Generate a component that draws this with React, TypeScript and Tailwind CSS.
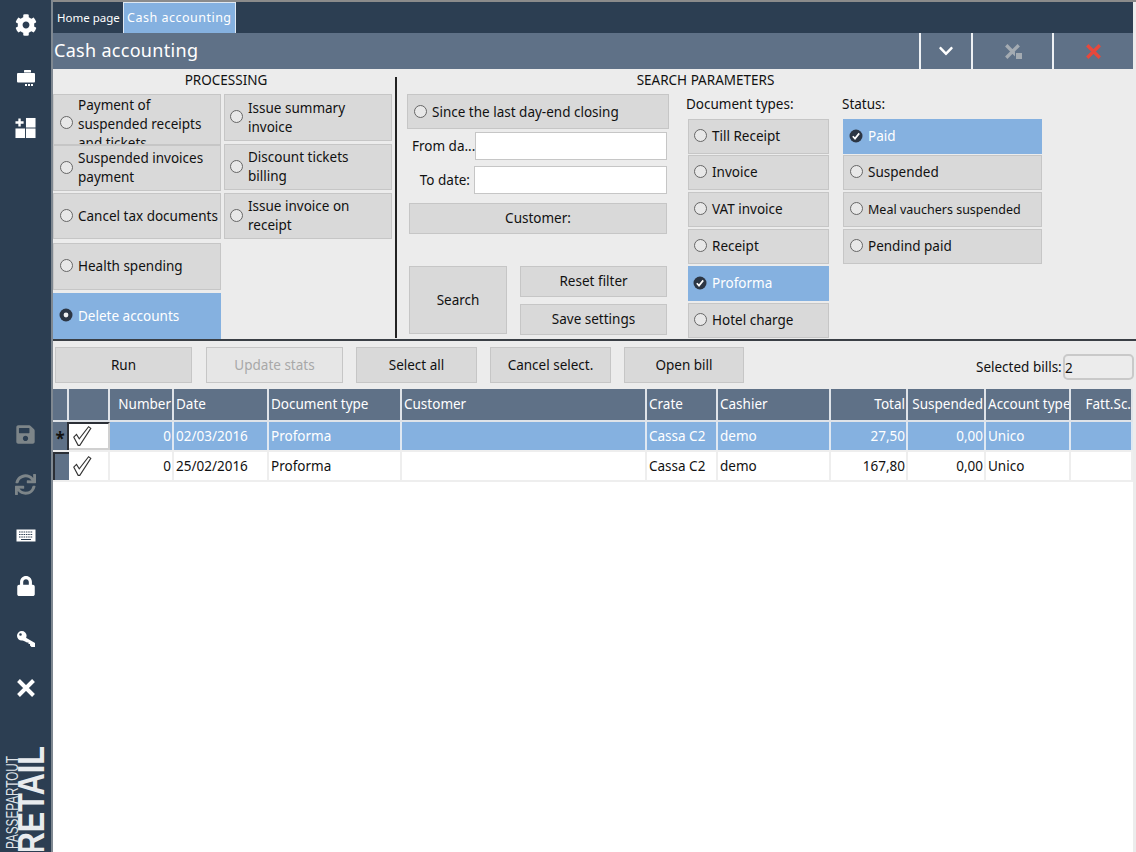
import { FaCog, FaSave, FaSync, FaLock, FaChevronDown } from "react-icons/fa";
import type { ReactNode } from "react";

const btn = "flex items-center justify-center border border-[#c6c6c6] bg-[#d9d9d9] text-[#111]";

function Radio({ state, className = "" }: { state?: "dot" | "check"; className?: string }) {
  if (state === "check") {
    return (
      <svg viewBox="0 0 14 14" className={`mb-[2px] -ml-[1px] h-[14px] w-[14px] shrink-0 ${className}`}>
        <circle cx="7" cy="7" r="6.5" fill="#2c3644" />
        <path d="M3.8 7.2 6 9.6 10.2 4.4" fill="none" stroke="#fff" strokeWidth="1.7" />
      </svg>
    );
  }
  if (state === "dot") {
    return (
      <svg viewBox="0 0 14 14" className={`mb-[2px] -ml-[1px] h-[14px] w-[14px] shrink-0 ${className}`}>
        <circle cx="7" cy="7" r="6.5" fill="#2c3644" />
        <circle cx="7" cy="7" r="2.4" fill="#f0f0f0" />
      </svg>
    );
  }
  return <span className={`mb-[2px] h-[13px] w-[13px] shrink-0 rounded-full border border-[#666] bg-[#e8e8e8] ${className}`} />;
}

function Option({
  label,
  className,
  state,
  selected,
  radioClass,
}: {
  label: ReactNode;
  className: string;
  state?: "dot" | "check";
  selected?: boolean;
  radioClass?: string;
}) {
  return (
    <div
      className={`flex items-center overflow-hidden border leading-[19px] ${
        selected ? "border-[#85b1e0] bg-[#85b1e0] text-white" : "border-[#c6c6c6] bg-[#d9d9d9] text-[#111]"
      } ${className}`}
    >
      <Radio state={state} className={radioClass} />
      <span className="ml-[5px] whitespace-nowrap">{label}</span>
    </div>
  );
}

function Check() {
  return (
    <svg viewBox="0 0 20 20" className="h-[22px] w-[22px]" fill="#fff" stroke="#333" strokeWidth="1">
      <path d="M2.5 11 5 8.5 7.5 12.5 16 1.5 18 3 8 18.5H6.5Z" />
    </svg>
  );
}

function RegisterIcon() {
  return (
    <svg viewBox="0 0 18 16" className="h-[16px] w-[18px]" fill="#fff">
      <rect x="7" y="0" width="7" height="2.500" rx="0.5" />
      <rect x="0" y="3" width="18" height="9.500" rx="1" />
      <rect x="8" y="14" width="2" height="2" />
      <rect x="11" y="14" width="2" height="2" />
      <rect x="14" y="14" width="2" height="2" />
    </svg>
  );
}

function TilesIcon() {
  return (
    <svg viewBox="0 0 22 22" className="h-[22px] w-[21px]" fill="#fff">
      <path d="M3.500 1h2.500v3h3v2.500h-3v3h-2.500v-3h-3v-2.500h3Z" />
      <rect x="11.500" y="0.500" width="10" height="10" />
      <rect x="0.500" y="11.500" width="10" height="10" />
      <rect x="11.500" y="11.500" width="10" height="10" />
    </svg>
  );
}

function KeyboardIcon() {
  return (
    <svg viewBox="0 0 20 13" className="h-[13px] w-[20px]">
      <rect x="0.500" y="0.500" width="19" height="12" fill="#fff" />
      <path d="M3 3h14M3 5.500h14M3 8h14" stroke="#2c3e52" strokeWidth="1.200" strokeDasharray="1.500 0.800" />
      <path d="M5 10.500h10" stroke="#2c3e52" strokeWidth="1" />
    </svg>
  );
}

function KeyIcon() {
  return (
    <svg viewBox="0 0 18 16" className="h-[16px] w-[18px]" fill="#fff">
      <path fillRule="evenodd" d="M4.800 0A4.800 4.800 0 1 1 4.800 9.600 4.800 4.800 0 0 1 4.800 0ZM3.500 2.200a1.300 1.300 0 1 0 0 2.600 1.300 1.300 0 0 0 0-2.600Z" />
      <path d="M6 5 18 12V16H14.500L13 14.500V13H11.500V11.500H10L5 9Z" />
    </svg>
  );
}

function CrossIcon({ className, width = 4 }: { className: string; width?: number }) {
  return (
    <svg viewBox="0 0 18 18" className={className} fill="none" stroke="currentColor" strokeWidth={width}>
      <path d="M1.500 1.500 16.500 16.500M16.500 1.500 1.500 16.500" />
    </svg>
  );
}

const cols = "grid-cols-[16px_41px_64px_95px_133px_245px_71px_113px_77px_78px_85px_62px]";

const headers: [string, string][] = [
  ["", ""],
  ["", ""],
  ["Number", "justify-end pr-[1px]"],
  ["Date", ""],
  ["Document type", ""],
  ["Customer", ""],
  ["Crate", ""],
  ["Cashier", ""],
  ["Total", "justify-end pr-[1px]"],
  ["Suspended", "justify-end pr-[1px]"],
  ["Account type", ""],
  ["Fatt.Sc.", "justify-end"],
];

const rows = [
  ["0", "02/03/2016", "Proforma", "", "Cassa C2", "demo", "27,50", "0,00", "Unico", ""],
  ["0", "25/02/2016", "Proforma", "", "Cassa C2", "demo", "167,80", "0,00", "Unico", ""],
];

const rightAligned = [0, 6, 7];

export default function App() {
  return (
    <div className="flex h-[852px] w-[1136px] overflow-hidden bg-[#ececec] font-['Noto_Sans',sans-serif] text-[13.5px] text-[#111]">
      <aside className="flex h-full w-[53px] shrink-0 flex-col items-center border-r-2 border-[#7f8891] bg-[#2c3e52]">
        <FaCog className="mt-[14px] h-[22px] w-[22px] text-white" />
        <div className="mt-[34px] h-[16px]"><RegisterIcon /></div>
        <div className="mt-[31px] h-[22px]"><TilesIcon /></div>
        <FaSave className="mt-[285px] h-[21px] w-[21px] text-[#7d8589]" />
        <FaSync className="mt-[29px] h-[21px] w-[21px] text-[#7d8589]" />
        <div className="mt-[34px] h-[13px]"><KeyboardIcon /></div>
        <FaLock className="mt-[34px] h-[20px] w-[20px] text-white" />
        <div className="mt-[35px] h-[16px]"><KeyIcon /></div>
        <CrossIcon className="mt-[32px] h-[18px] w-[18px] shrink-0 text-white" />
        <div className="mt-[49px] flex h-[105px] w-full shrink-0 items-start overflow-hidden pl-[6px] font-['Liberation_Sans',sans-serif]">
          <div className="mt-[10px] origin-top scale-y-[0.69]">
            <div className="rotate-180 whitespace-nowrap text-[17px] leading-[13px] text-[#dfe3e8] [writing-mode:vertical-rl]">PASSEPARTOUT</div>
          </div>
          <div className="origin-top scale-y-[0.85]">
            <div className="rotate-180 whitespace-nowrap text-[36px] font-bold leading-[26px] text-[#e8ebee] [writing-mode:vertical-rl]">RETAIL</div>
          </div>
        </div>
      </aside>

      <main className="flex h-full w-[1083px] flex-col border-t-2 border-[#8b8b8b]">
        <div className="flex h-[31px] w-[1080px] shrink-0 items-stretch bg-[#2c3e52] text-white">
          <div className="flex w-[70px] items-center pl-[4px] text-[11.5px] whitespace-nowrap">Home page</div>
          <div className="flex w-[113px] items-center border-x border-t border-[#dfe8f2] bg-[#85b1e0] pl-[3px] text-[12.5px] tracking-[0.5px] whitespace-nowrap">Cash accounting</div>
        </div>

        <div className="flex h-[36px] w-[1080px] shrink-0 items-stretch bg-[#5f7187] text-white">
          <div className="flex-1 pl-[1px] text-[18px] leading-[35px] tracking-[0.3px]">Cash accounting</div>
          <div className="flex w-[52px] items-center justify-center border-l-2 border-[#eef1f4]"><FaChevronDown className="h-[16px] w-[16px]" /></div>
          <div className="flex w-[81px] items-center justify-center border-l-2 border-[#eef1f4]">
            <span className="relative">
              <CrossIcon className="h-[15px] w-[15px] text-[#a4abb2]" />
              <span className="absolute -right-[3px] -bottom-[1px] h-[8px] w-[8px] border border-[#5f7187] bg-[#a4abb2]" />
            </span>
          </div>
          <div className="flex w-[81px] items-center justify-center border-l-2 border-[#eef1f4]"><CrossIcon className="h-[15px] w-[15px] text-[#e8483c]" /></div>
        </div>

        <section className="flex h-[272px] shrink-0 border-b-2 border-[#3a3f45]">
          <div className="w-[342px] shrink-0">
            <div className="h-[25px] w-[346px] text-center leading-[22px]">PROCESSING</div>
            <div className="flex gap-[3px]">
              <div className="flex w-[168px] flex-col">
                <Option className="h-[51px] items-start pt-[1px] pl-[6px]" radioClass="mt-[20px]" label={<>Payment of<br />suspended receipts<br />and tickets</>} />
                <Option className="mb-[2px] h-[46px] pl-[6px]" label={<>Suspended invoices<br />payment</>} />
                <Option className="mb-[4px] h-[46px] pl-[6px]" label="Cancel tax documents" />
                <Option className="mb-[3px] h-[47px] pl-[6px]" label="Health spending" />
                <Option className="h-[46px] pl-[6px]" label="Delete accounts" state="dot" selected />
              </div>
              <div className="flex w-[168px] flex-col">
                <Option className="mb-[3px] h-[47px] pl-[5px]" label={<>Issue summary<br />invoice</>} />
                <Option className="mb-[3px] h-[46px] pl-[5px]" label={<>Discount tickets<br />billing</>} />
                <Option className="h-[46px] pl-[5px]" label={<>Issue invoice on<br />receipt</>} />
              </div>
            </div>
          </div>

          <div className="mt-[8px] h-[261px] w-[2px] shrink-0 bg-[#222]" />

          <div className="flex-1">
            <div className="h-[25px] w-[617px] text-center leading-[22px]">SEARCH PARAMETERS</div>
            <div className="flex">
              <div className="ml-[10px] w-[262px] shrink-0">
                <Option className="h-[35px] pt-[1px] pl-[6px]" label="Since the last day-end closing" />
                <div className="mt-[3px] flex h-[28px] items-center">
                  <span className="ml-[5px] w-[63px] whitespace-nowrap">From da...</span>
                  <div className="h-[28px] w-[192px] border border-[#c6c6c6] bg-white" />
                </div>
                <div className="mt-[6px] flex h-[28px] items-center">
                  <span className="w-[67px] pr-[4px] text-right whitespace-nowrap">To date:</span>
                  <div className="h-[28px] w-[193px] border border-[#c6c6c6] bg-white" />
                </div>
                <div className={`mt-[9px] ml-[2px] h-[31px] w-[258px] ${btn}`}>Customer:</div>
                <div className="mt-[32px] ml-[2px] flex gap-[13px]">
                  <div className={`h-[68px] w-[98px] ${btn}`}>Search</div>
                  <div className="flex flex-col gap-[7px]">
                    <div className={`h-[31px] w-[147px] ${btn}`}>Reset filter</div>
                    <div className={`h-[31px] w-[147px] ${btn}`}>Save settings</div>
                  </div>
                </div>
              </div>

              <div className="ml-[19px] w-[141px] shrink-0">
                <div className="-ml-[2px] h-[25px] leading-[20px] whitespace-nowrap">Document types:</div>
                <Option className="mb-[1px] h-[35px] pl-[5px]" label="Till Receipt" />
                <Option className="mb-[2px] h-[35px] pl-[5px]" label="Invoice" />
                <Option className="mb-[2px] h-[35px] pl-[5px]" label="VAT invoice" />
                <Option className="mb-[2px] h-[35px] pl-[5px]" label="Receipt" />
                <Option className="mb-[2px] h-[35px] pl-[5px]" label="Proforma" state="check" selected />
                <Option className="h-[35px] pl-[5px]" label="Hotel charge" />
              </div>

              <div className="ml-[14px] w-[199px] shrink-0">
                <div className="-ml-[1px] h-[25px] leading-[20px]">Status:</div>
                <Option className="mb-[1px] h-[35px] pl-[6px]" label="Paid" state="check" selected />
                <Option className="mb-[2px] h-[35px] pl-[6px]" label="Suspended" />
                <Option className="mb-[2px] h-[35px] pl-[6px] text-[12.5px]" label="Meal vauchers suspended" />
                <Option className="h-[35px] pl-[6px]" label="Pendind paid" />
              </div>
            </div>
          </div>
        </section>

        <div className="mt-[6px] flex h-[36px] shrink-0 items-stretch pl-[2px]">
          <div className={`w-[137px] ${btn}`}>Run</div>
          <div className="ml-[14px] flex w-[137px] items-center justify-center border border-[#c6c6c6] bg-[#e6e6e6] text-[#a8a8a8]">Update stats</div>
          <div className={`ml-[13px] w-[121px] ${btn}`}>Select all</div>
          <div className={`ml-[13px] w-[121px] ${btn}`}>Cancel select.</div>
          <div className={`ml-[13px] w-[120px] ${btn}`}>Open bill</div>
          <div className="mt-[7px] ml-[232px] flex h-[26px] items-center whitespace-nowrap">
            <span className="w-[87px]">Selected bills:</span>
            <div className="h-[26px] w-[71px] rounded-[5px] border-2 border-[#c9c9c9] leading-[24px]">2</div>
          </div>
        </div>

        <div className="mt-[6px] flex min-h-0 w-[1080px] flex-1 flex-col bg-white">
          <div className={`grid h-[33px] shrink-0 border-b-2 border-[#dfe3e8] bg-[#ececec] ${cols}`}>
            {headers.map(([label, align], i) => (
              <div key={i} className={`flex items-center overflow-hidden border-r-2 border-[#dfe3e8] bg-[#5f7187] pl-[2px] whitespace-nowrap text-white ${align}`}>
                {label}
              </div>
            ))}
          </div>
          {rows.map((row, r) => (
            <div key={r} className={`grid h-[30px] shrink-0 grid-rows-[28px] border-b-2 border-[#eeeeee] ${cols}`}>
              <div className={`flex items-center justify-center overflow-hidden bg-[#5f7187] pt-[6px] text-[17px] leading-[20px] font-bold ${r === 0 ? "border-r-2 border-[#2b2f36]" : "border-t-2 border-l-2 border-[#2b2f36]"}`}>
                {r === 0 ? "*" : ""}
              </div>
              <div className={`flex items-center pl-[2px] ${r === 0 ? "border-t-2 border-r-2 border-b-2 border-t-[#2b2f36] border-r-[#d0d0d0] border-b-[#d0d0d0]" : "border-r-2 border-[#eeeeee]"}`}>
                <Check />
              </div>
              {row.map((cell, c) => (
                <div
                  key={c}
                  className={`flex items-center overflow-hidden border-r-2 pl-[2px] whitespace-nowrap ${
                    r === 0 ? "border-[#dfe8f2] bg-[#85b1e0] text-white" : "border-[#eeeeee] bg-white text-[#111]"
                  } ${rightAligned.includes(c) ? "justify-end pr-[1px]" : ""}`}
                >
                  {cell}
                </div>
              ))}
            </div>
          ))}
        </div>
      </main>
    </div>
  );
}
